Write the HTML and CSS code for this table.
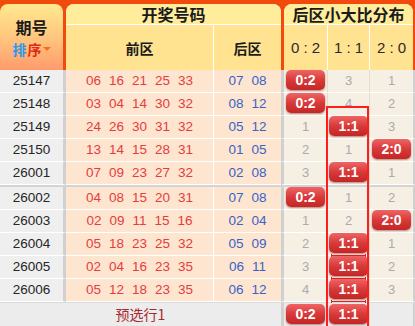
FILE: index.html
```html
<!DOCTYPE html>
<html lang="zh">
<head>
<meta charset="utf-8">
<link rel="stylesheet" href="styles.css">
</head>
<body>
<div class="board">
  <div class="head">
    <div class="h-id">
      <div class="h-title">期号</div>
      <div class="sort"><span class="s1">排</span><span class="s2">序</span><span class="caret"></span></div>
    </div>
    <div class="h-draw">
      <div class="h-band">开奖号码</div>
      <div class="h-sub"><div>前区</div><div>后区</div></div>
    </div>
    <div class="h-dist">
      <div class="h-band">后区小大比分布</div>
      <div class="h-sub3"><div>0 : 2</div><div>1 : 1</div><div>2 : 0</div></div>
    </div>
  </div>

  <div class="group">
    <div class="row">
      <div class="c-id">25147</div>
      <div class="c-front"><span>06</span><span>16</span><span>21</span><span>25</span><span>33</span></div>
      <div class="c-back"><span>07</span><span>08</span></div>
      <div class="c-r r1"><span class="badge">0:2</span></div>
      <div class="c-r r2">3</div>
      <div class="c-r r3">1</div>
    </div>
    <div class="row">
      <div class="c-id">25148</div>
      <div class="c-front"><span>03</span><span>04</span><span>14</span><span>30</span><span>32</span></div>
      <div class="c-back"><span>08</span><span>12</span></div>
      <div class="c-r r1"><span class="badge">0:2</span></div>
      <div class="c-r r2">4</div>
      <div class="c-r r3">2</div>
    </div>
    <div class="row">
      <div class="c-id">25149</div>
      <div class="c-front"><span>24</span><span>26</span><span>30</span><span>31</span><span>32</span></div>
      <div class="c-back"><span>05</span><span>12</span></div>
      <div class="c-r r1">1</div>
      <div class="c-r r2"><span class="badge">1:1</span></div>
      <div class="c-r r3">3</div>
    </div>
    <div class="row">
      <div class="c-id">25150</div>
      <div class="c-front"><span>13</span><span>14</span><span>15</span><span>28</span><span>31</span></div>
      <div class="c-back"><span>01</span><span>05</span></div>
      <div class="c-r r1">2</div>
      <div class="c-r r2">1</div>
      <div class="c-r r3"><span class="badge">2:0</span></div>
    </div>
    <div class="row">
      <div class="c-id">26001</div>
      <div class="c-front"><span>07</span><span>09</span><span>23</span><span>27</span><span>32</span></div>
      <div class="c-back"><span>02</span><span>08</span></div>
      <div class="c-r r1">3</div>
      <div class="c-r r2"><span class="badge">1:1</span></div>
      <div class="c-r r3">1</div>
    </div>
  </div>
  <div class="sep"></div>
  <div class="group">
    <div class="row">
      <div class="c-id">26002</div>
      <div class="c-front"><span>04</span><span>08</span><span>15</span><span>20</span><span>31</span></div>
      <div class="c-back"><span>07</span><span>08</span></div>
      <div class="c-r r1"><span class="badge">0:2</span></div>
      <div class="c-r r2">1</div>
      <div class="c-r r3">2</div>
    </div>
    <div class="row">
      <div class="c-id">26003</div>
      <div class="c-front"><span>02</span><span>09</span><span>11</span><span>15</span><span>16</span></div>
      <div class="c-back"><span>02</span><span>04</span></div>
      <div class="c-r r1">1</div>
      <div class="c-r r2">2</div>
      <div class="c-r r3"><span class="badge">2:0</span></div>
    </div>
    <div class="row">
      <div class="c-id">26004</div>
      <div class="c-front"><span>05</span><span>18</span><span>23</span><span>25</span><span>32</span></div>
      <div class="c-back"><span>05</span><span>09</span></div>
      <div class="c-r r1">2</div>
      <div class="c-r r2"><span class="badge join">1:1</span></div>
      <div class="c-r r3">1</div>
    </div>
    <div class="row">
      <div class="c-id">26005</div>
      <div class="c-front"><span>02</span><span>04</span><span>16</span><span>23</span><span>35</span></div>
      <div class="c-back"><span>06</span><span>11</span></div>
      <div class="c-r r1">3</div>
      <div class="c-r r2"><span class="badge join">1:1</span></div>
      <div class="c-r r3">2</div>
    </div>
    <div class="row">
      <div class="c-id">26006</div>
      <div class="c-front"><span>05</span><span>12</span><span>18</span><span>23</span><span>35</span></div>
      <div class="c-back"><span>06</span><span>12</span></div>
      <div class="c-r r1">4</div>
      <div class="c-r r2"><span class="badge join">1:1</span></div>
      <div class="c-r r3">3</div>
    </div>
  </div>
  <div class="foot">
    <div class="f-label">预选行1</div>
    <div class="f-r r1"><span class="badge">0:2</span></div>
    <div class="f-r r2"><span class="badge">1:1</span></div>
    <div class="f-r r3"></div>
  </div>
  <div class="streak"></div>
</div>
</body>
</html>
```

FILE: styles.css
```css
* { box-sizing: border-box; }
html, body { margin: 0; padding: 0; background: #ffffff; }
body { font-family: "Liberation Sans", Arial, "Noto Sans CJK SC", sans-serif; }

.board {
  width: 415px;
  height: 326px;
  overflow: hidden;
  position: relative;
}

/* ---------- header ---------- */
.head {
  display: grid;
  grid-template-columns: 63px 215px 129px;
  column-gap: 3px;
  padding: 4px 2px 0 0;
  height: 70px;
  background: #f24a0c;
}
.h-id {
  border-radius: 8px 8px 0 0;
  background: linear-gradient(#ffe98f 0%, #ffc37c 55%, #ff9a6b 100%);
  display: flex;
  flex-direction: column;
  align-items: center;
  justify-content: center;
  row-gap: 7px;
  font-family: "Noto Sans CJK SC", sans-serif;
}
.h-title {
  font-size: 16px;
  font-weight: 700;
  line-height: 1;
  color: #1b1b1b;
}
.sort {
  display: flex;
  align-items: center;
  column-gap: 1px;
  font-size: 14px;
  font-weight: 700;
  line-height: 1;
}
.s1 { color: #2a98ee; }
.s2 { color: #e0281a; }
.caret {
  width: 0;
  height: 0;
  border-left: 4px solid transparent;
  border-right: 4px solid transparent;
  border-top: 4px solid #ff6a10;
}

.h-draw, .h-dist {
  border-radius: 8px 8px 0 0;
  background: #ffffff;
  display: flex;
  flex-direction: column;
  row-gap: 1px;
}
.h-band {
  height: 20px;
  display: flex;
  align-items: center;
  justify-content: center;
  border-radius: 8px 8px 0 0;
  background: #ffed9b;
  font-family: "Noto Sans CJK SC", sans-serif;
  font-size: 16px;
  font-weight: 700;
  line-height: 1;
  color: #1b1b1b;
}
.h-sub {
  flex: 1;
  display: grid;
  grid-template-columns: 147px 67px;
  column-gap: 1px;
}
.h-sub > div {
  background: #ffe390;
  display: flex;
  align-items: center;
  justify-content: center;
  font-family: "Noto Sans CJK SC", sans-serif;
  font-size: 14px;
  font-weight: 700;
  line-height: 1;
  color: #1b1b1b;
}
.h-sub3 {
  flex: 1;
  display: grid;
  grid-template-columns: 43px 41px 43px;
  column-gap: 1px;
}
.h-sub3 > div {
  background: #ffe390;
  display: flex;
  align-items: center;
  justify-content: center;
  font-size: 15px;
  color: #2a2a2a;
  white-space: pre;
}

/* ---------- body rows ---------- */
.row {
  display: grid;
  grid-template-columns: 66px 148px 67px 47px 42px 45px;
  height: 23px;
}
.row > div {
  border-bottom: 1px solid #ffffff;
  line-height: 22px;
  text-align: center;
}
.c-id {
  background: #efefef;
  border-right: 3px solid #d0d0d0;
  color: #262626;
  font-size: 13.5px;
}
.c-front, .c-back {
  background: #fee5cf;
  display: flex;
  justify-content: center;
  column-gap: 8px;
  font-size: 13.5px;
}
.c-front { color: #e63c40; border-right: 1px solid #ffffff; }
.c-back { color: #3863c8; }
.c-r {
  background: #f5efe4;
  color: #ababab;
  font-size: 13px;
}
.r1 { border-left: 3px solid #d0d0d0; border-right: 1px solid #e3dccf; }
.r2 { border-right: 1px solid #e3dccf; }
.r3 { border-right: 2px solid #d0d0d0; }

.sep { height: 2px; background: #d4d4d4; }

.badge {
  position: relative;
  display: inline-block;
  width: 39px;
  height: 20px;
  line-height: 20px;
  vertical-align: top;
  border-radius: 5px;
  background: linear-gradient(#f06464 0%, #d83a3a 50%, #c42626 100%);
  box-shadow: 0 1px 2px rgba(110, 0, 0, 0.45);
  color: #ffffff;
  font-size: 14px;
  font-weight: 700;
}
.badge.join::after {
  content: "";
  position: absolute;
  left: 2px;
  right: 2px;
  bottom: -4px;
  height: 3px;
  border-left: 1px solid #e02020;
  border-right: 1px solid #e02020;
  background: linear-gradient(#e02020, #e02020) center / 100% 1px no-repeat;
}

/* ---------- footer ---------- */
.foot {
  display: grid;
  grid-template-columns: 281px 47px 42px 45px;
  height: 24px;
  background: #ececec;
  border-top: 1px solid #dadada;
}
.foot > div { text-align: center; line-height: 23px; }
.f-label {
  font-family: "Noto Sans CJK SC", sans-serif;
  font-size: 14px;
  color: #a8282c;
}
.f-r .badge { margin-top: 1px; }

/* ---------- streak highlight ---------- */
.streak {
  position: absolute;
  left: 326px;
  top: 106px;
  width: 43px;
  height: 222px;
  border: 2px solid #ff1e1e;
  pointer-events: none;
}
```
